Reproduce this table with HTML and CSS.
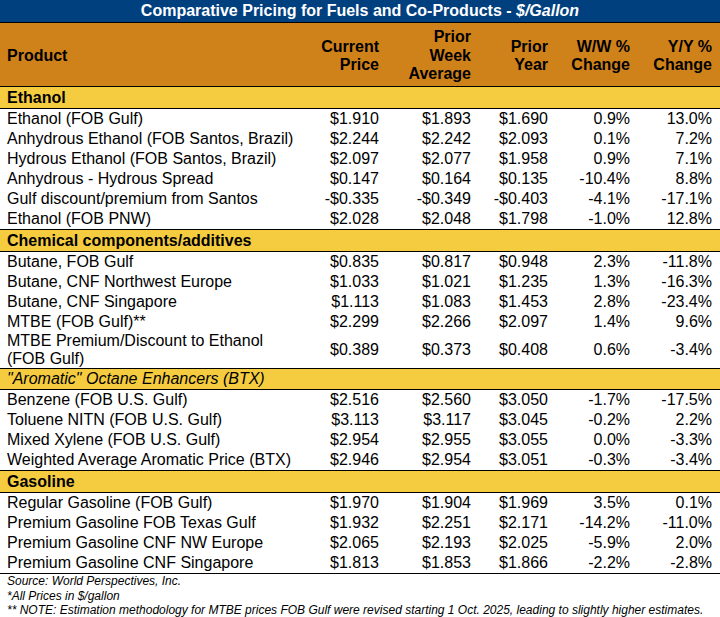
FILE: index.html
```html
<!DOCTYPE html>
<html>
<head>
<meta charset="utf-8">
<link rel="stylesheet" href="styles.css">
</head>
<body>
<div class="title">Comparative Pricing for Fuels and Co-Products - <em>$/Gallon</em></div>
<table class="prices">
  <colgroup>
    <col class="c-prod"><col class="c-cur"><col class="c-week"><col class="c-year"><col class="c-ww"><col class="c-yy">
  </colgroup>
  <thead>
    <tr>
      <th class="prod">Product</th>
      <th>Current<br>Price</th>
      <th>Prior<br>Week<br>Average</th>
      <th>Prior<br>Year</th>
      <th>W/W %<br>Change</th>
      <th>Y/Y %<br>Change</th>
    </tr>
  </thead>
  <tbody>
    <tr class="section"><td colspan="6">Ethanol</td></tr>
    <tr><td class="prod">Ethanol (FOB Gulf)</td><td>$1.910</td><td>$1.893</td><td>$1.690</td><td>0.9%</td><td>13.0%</td></tr>
    <tr><td class="prod">Anhydrous Ethanol (FOB Santos, Brazil)</td><td>$2.244</td><td>$2.242</td><td>$2.093</td><td>0.1%</td><td>7.2%</td></tr>
    <tr><td class="prod">Hydrous Ethanol (FOB Santos, Brazil)</td><td>$2.097</td><td>$2.077</td><td>$1.958</td><td>0.9%</td><td>7.1%</td></tr>
    <tr><td class="prod">Anhydrous - Hydrous Spread</td><td>$0.147</td><td>$0.164</td><td>$0.135</td><td>-10.4%</td><td>8.8%</td></tr>
    <tr><td class="prod">Gulf discount/premium from Santos</td><td>-$0.335</td><td>-$0.349</td><td>-$0.403</td><td>-4.1%</td><td>-17.1%</td></tr>
    <tr><td class="prod">Ethanol (FOB PNW)</td><td>$2.028</td><td>$2.048</td><td>$1.798</td><td>-1.0%</td><td>12.8%</td></tr>

    <tr class="section"><td colspan="6">Chemical components/additives</td></tr>
    <tr><td class="prod">Butane, FOB Gulf</td><td>$0.835</td><td>$0.817</td><td>$0.948</td><td>2.3%</td><td>-11.8%</td></tr>
    <tr><td class="prod">Butane, CNF Northwest Europe</td><td>$1.033</td><td>$1.021</td><td>$1.235</td><td>1.3%</td><td>-16.3%</td></tr>
    <tr><td class="prod">Butane, CNF Singapore</td><td>$1.113</td><td>$1.083</td><td>$1.453</td><td>2.8%</td><td>-23.4%</td></tr>
    <tr><td class="prod">MTBE (FOB Gulf)**</td><td>$2.299</td><td>$2.266</td><td>$2.097</td><td>1.4%</td><td>9.6%</td></tr>
    <tr class="wrap"><td class="prod">MTBE Premium/Discount to Ethanol<br>(FOB Gulf)</td><td>$0.389</td><td>$0.373</td><td>$0.408</td><td>0.6%</td><td>-3.4%</td></tr>

    <tr class="section italic"><td colspan="6">"Aromatic" Octane Enhancers (BTX)</td></tr>
    <tr><td class="prod">Benzene (FOB U.S. Gulf)</td><td>$2.516</td><td>$2.560</td><td>$3.050</td><td>-1.7%</td><td>-17.5%</td></tr>
    <tr><td class="prod">Toluene NITN (FOB U.S. Gulf)</td><td>$3.113</td><td>$3.117</td><td>$3.045</td><td>-0.2%</td><td>2.2%</td></tr>
    <tr><td class="prod">Mixed Xylene (FOB U.S. Gulf)</td><td>$2.954</td><td>$2.955</td><td>$3.055</td><td>0.0%</td><td>-3.3%</td></tr>
    <tr><td class="prod">Weighted Average Aromatic Price (BTX)</td><td>$2.946</td><td>$2.954</td><td>$3.051</td><td>-0.3%</td><td>-3.4%</td></tr>

    <tr class="section"><td colspan="6">Gasoline</td></tr>
    <tr><td class="prod">Regular Gasoline (FOB Gulf)</td><td>$1.970</td><td>$1.904</td><td>$1.969</td><td>3.5%</td><td>0.1%</td></tr>
    <tr><td class="prod">Premium Gasoline FOB Texas Gulf</td><td>$1.932</td><td>$2.251</td><td>$2.171</td><td>-14.2%</td><td>-11.0%</td></tr>
    <tr><td class="prod">Premium Gasoline CNF NW Europe</td><td>$2.065</td><td>$2.193</td><td>$2.025</td><td>-5.9%</td><td>2.0%</td></tr>
    <tr class="last"><td class="prod">Premium Gasoline CNF Singapore</td><td>$1.813</td><td>$1.853</td><td>$1.866</td><td>-2.2%</td><td>-2.8%</td></tr>
  </tbody>
</table>
<div class="notes">
  <p>Source: World Perspectives, Inc.</p>
  <p>*All Prices in $/gallon</p>
  <p>** NOTE: Estimation methodology for MTBE prices FOB Gulf were revised starting 1 Oct. 2025, leading to slightly higher estimates.</p>
</div>
</body>
</html>
```

FILE: styles.css
```css
html, body {
  margin: 0;
  padding: 0;
  background: #ffffff;
}
body {
  width: 720px;
  font-family: "Liberation Sans", Arial, sans-serif;
  color: #000000;
}
.title {
  background: #00407f;
  color: #ffffff;
  font-weight: bold;
  font-size: 16px;
  height: 22px;
  line-height: 22px;
  text-align: center;
  border-bottom: 1px solid #000000;
}
.title em {
  font-style: italic;
}
.prices {
  width: 720px;
  border-collapse: collapse;
  table-layout: fixed;
  font-size: 16px;
}
.c-prod { width: 300px; }
.c-cur { width: 87px; }
.c-week { width: 92px; }
.c-year { width: 77px; }
.c-ww { width: 82px; }
.c-yy { width: 82px; }

.prices th {
  background: #d0821a;
  font-weight: bold;
  text-align: right;
  vertical-align: middle;
  height: 60px;
  line-height: 18.5px;
  padding: 3px 8px 0 0;
  border-bottom: 1px solid #000000;
}
.prices th.prod {
  text-align: left;
  padding-left: 7px;
}
.prices td {
  line-height: 20px;
  padding: 0 8px 0 0;
  text-align: right;
  white-space: nowrap;
  vertical-align: middle;
}
.prices td.prod {
  text-align: left;
  padding-left: 7px;
  padding-right: 0;
}
.prices tr.wrap td {
  line-height: 18px;
}
.prices tr.section td {
  background: #f5cc40;
  font-weight: bold;
  text-align: left;
  line-height: 21px;
  padding-left: 7px;
  border-top: 1px solid #000000;
  border-bottom: 1px solid #000000;
}
.prices tr.section.italic td {
  font-weight: normal;
  font-style: italic;
  line-height: 20px;
}
.prices tr.last td {
  border-bottom: 1px solid #000000;
}
.notes {
  padding: 0 0 0 7px;
  font-size: 12px;
  font-style: italic;
  line-height: 14.5px;
  color: #000000;
}
.notes p {
  margin: 0;
}
```
